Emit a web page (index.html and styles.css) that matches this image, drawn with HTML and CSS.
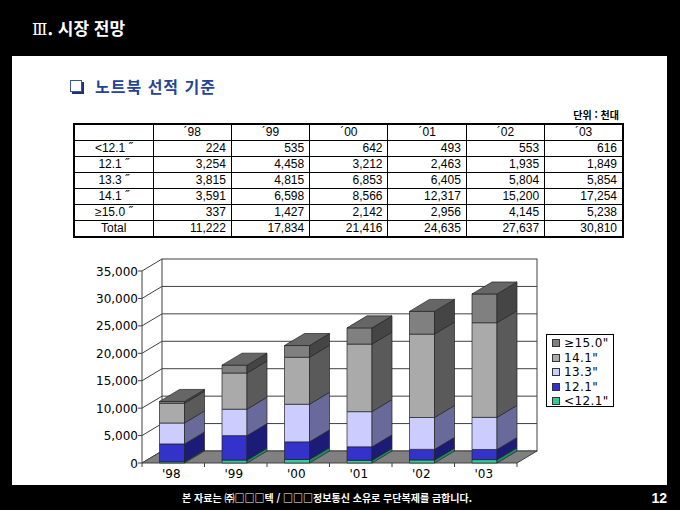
FILE: index.html
```html
<!DOCTYPE html>
<html lang="ko">
<head>
<meta charset="utf-8">
<title>시장 전망</title>
<link rel="stylesheet" href="styles.css">
</head>
<body>
<header class="top-bar">
  <h1 class="page-title"><span class="numeral">Ⅲ</span>. 시장 전망</h1>
</header>
<main class="panel">
  <h2 class="subtitle"><span class="check-box"></span><span>노트북 선적 기준</span></h2>
  <div class="unit">단위 : 천대</div>
  <table class="data-table">
    <colgroup><col class="col-head"><col span="6"></colgroup>
    <thead>
      <tr><th></th><th>´98</th><th>´99</th><th>´00</th><th>´01</th><th>´02</th><th>´03</th></tr>
    </thead>
    <tbody>
      <tr><th>&lt;12.1 ˝</th><td>224</td><td>535</td><td>642</td><td>493</td><td>553</td><td>616</td></tr>
      <tr><th>12.1 ˝</th><td>3,254</td><td>4,458</td><td>3,212</td><td>2,463</td><td>1,935</td><td>1,849</td></tr>
      <tr><th>13.3 ˝</th><td>3,815</td><td>4,815</td><td>6,853</td><td>6,405</td><td>5,804</td><td>5,854</td></tr>
      <tr><th>14.1 ˝</th><td>3,591</td><td>6,598</td><td>8,566</td><td>12,317</td><td>15,200</td><td>17,254</td></tr>
      <tr><th>≥15.0 ˝</th><td>337</td><td>1,427</td><td>2,142</td><td>2,956</td><td>4,145</td><td>5,238</td></tr>
      <tr><th>Total</th><td>11,222</td><td>17,834</td><td>21,416</td><td>24,635</td><td>27,637</td><td>30,810</td></tr>
    </tbody>
  </table>
  <div class="chart-row">
    <svg id="chart" class="chart" viewBox="80 255 460 227" width="460" height="227" xmlns="http://www.w3.org/2000/svg"></svg>
    <ul class="legend">
      <li class="legend-item"><span class="swatch swatch-15"></span>≥15.0"</li>
      <li class="legend-item"><span class="swatch swatch-141"></span>14.1"</li>
      <li class="legend-item"><span class="swatch swatch-133"></span>13.3"</li>
      <li class="legend-item"><span class="swatch swatch-121"></span>12.1"</li>
      <li class="legend-item"><span class="swatch swatch-lt"></span>&lt;12.1"</li>
    </ul>
  </div>
</main>
<footer class="bottom-bar">
  <p class="notice">본 자료는 ㈜□□□텍 / □□□정보통신 소유로 무단복제를 금합니다.</p>
  <span class="page-no">12</span>
</footer>
<script src="script.js"></script>
</body>
</html>
```
FILE: styles.css
```css
html, body {
  margin: 0;
  padding: 0;
}
body {
  width: 680px;
  height: 510px;
  overflow: hidden;
  background: #000;
  font-family: "Liberation Sans", "Noto Sans CJK KR", sans-serif;
}
.top-bar {
  height: 56px;
  box-sizing: border-box;
  padding: 0 0 2px 32px;
  display: flex;
  align-items: center;
}
.page-title {
  margin: 0;
  color: #fff;
  font: bold 17px "Noto Sans CJK KR", sans-serif;
  letter-spacing: 0;
}
.numeral {
  font-family: "DejaVu Serif", "Liberation Serif", serif;
  font-weight: normal;
  font-size: 16px;
}
.panel {
  margin-left: 12px;
  width: 655px;
  height: 429px;
  box-sizing: border-box;
  background: #fff;
  padding-top: 20px;
  overflow: hidden;
}
.subtitle {
  margin: 0 0 0 58px;
  height: 20px;
  display: flex;
  align-items: center;
  gap: 13px;
  color: #24449a;
  font: bold 16px "Noto Sans CJK KR", sans-serif;
  letter-spacing: 1px;
}
.check-box {
  width: 10px;
  height: 10px;
  border: 1px solid #3a56a5;
  background: #fff;
  box-shadow: 2px 2px 0 #1c3275;
}
.unit {
  margin: 11px 48px 0 0;
  height: 13px;
  line-height: 13px;
  text-align: right;
  font: bold 10px "Noto Sans CJK KR", sans-serif;
  color: #000;
}
.data-table {
  margin: 3px 0 0 61px;
  width: 551px;
  border-collapse: collapse;
  table-layout: fixed;
  border: 2px solid #000;
  font: 12px "Liberation Sans", sans-serif;
  color: #000;
}
.col-head {
  width: 79px;
}
.data-table th,
.data-table td {
  border: 1px solid #000;
  height: 15px;
  padding: 0 5px;
  line-height: 15px;
  font-weight: normal;
  white-space: nowrap;
}
.data-table th {
  text-align: center;
}
.data-table td {
  text-align: right;
}
.chart-row {
  display: flex;
  align-items: flex-start;
  margin: 18px 0 0 68px;
}
.chart {
  display: block;
  flex: none;
}
.axis-label {
  font: 12px "DejaVu Sans", sans-serif;
  fill: #000;
}
.legend {
  list-style: none;
  margin: 78px 0 0 6px;
  padding: 1px 0 0 5px;
  width: 68px;
  height: 73px;
  box-sizing: border-box;
  border: 1px solid #000;
  font: 12px "DejaVu Sans", sans-serif;
  letter-spacing: 0.4px;
}
.legend-item {
  height: 14.5px;
  display: flex;
  align-items: center;
  gap: 4px;
  white-space: nowrap;
}
.swatch {
  width: 6px;
  height: 6px;
  border: 1px solid #333;
  flex: none;
}
.swatch-15 { background: #808080; }
.swatch-141 { background: #aaaaaa; }
.swatch-133 { background: #ccccff; }
.swatch-121 { background: #3333cc; }
.swatch-lt { background: #33cc99; }
.bottom-bar {
  height: 25px;
  display: flex;
  align-items: center;
  color: #fff;
}
.notice {
  margin: 0 0 0 182px;
  font: bold 10px "Noto Sans CJK KR", sans-serif;
}
.page-no {
  margin-left: auto;
  margin-right: 13px;
  font: bold 14px "Liberation Sans", sans-serif;
}
```
FILE: script.js
```js
(function () {
  var NS = 'http://www.w3.org/2000/svg';
  var svg = document.getElementById('chart');
  var X0 = 142, Y0 = 462, DX = 20, DY = -12, K = 192 / 35000;
  var CAT = 62.5, BW = 25, XR = 517;
  var GRID = '#404040';

  function el(tag, attrs, text) {
    var n = document.createElementNS(NS, tag);
    for (var a in attrs) n.setAttribute(a, attrs[a]);
    if (text !== undefined) n.textContent = text;
    svg.appendChild(n);
    return n;
  }
  function pts(arr) {
    return arr.map(function (p) { return p[0] + ',' + p[1]; }).join(' ');
  }

  var backY = Y0 + DY;
  el('rect', { x: X0 + DX, y: backY - 35000 * K, width: XR - X0, height: 35000 * K, fill: '#fff', stroke: GRID, 'stroke-width': 1 });
  for (var v = 5000; v < 35000; v += 5000) {
    var yb = backY - v * K;
    el('line', { x1: X0 + DX, y1: yb, x2: XR + DX, y2: yb, stroke: GRID, 'stroke-width': 1 });
  }
  for (var w = 0; w <= 35000; w += 5000) {
    var yf = Y0 - w * K;
    el('line', { x1: X0, y1: yf, x2: X0 + DX, y2: yf + DY, stroke: GRID, 'stroke-width': 1 });
    el('line', { x1: X0 - 4, y1: yf, x2: X0, y2: yf, stroke: GRID, 'stroke-width': 1 });
    el('text', { x: X0 - 4, y: yf + 4.5, 'text-anchor': 'end', 'class': 'axis-label' }, w.toLocaleString('en-US'));
  }
  el('line', { x1: X0, y1: Y0 - 35000 * K, x2: X0, y2: Y0, stroke: GRID, 'stroke-width': 1 });
  el('polygon', { points: pts([[X0, Y0], [XR, Y0], [XR + DX, backY], [X0 + DX, backY]]), fill: '#808080', stroke: GRID, 'stroke-width': 1 });
  for (var t = 0; t <= 6; t++) {
    var xt = X0 + CAT * t;
    el('line', { x1: xt, y1: Y0, x2: xt, y2: Y0 + 4, stroke: GRID, 'stroke-width': 1 });
  }

  var years = ["'98", "'99", "'00", "'01", "'02", "'03"];
  var data = [
    [224, 3254, 3815, 3591, 337],
    [535, 4458, 4815, 6598, 1427],
    [642, 3212, 6853, 8566, 2142],
    [493, 2463, 6405, 12317, 2956],
    [553, 1935, 5804, 15200, 4145],
    [616, 1849, 5854, 17254, 5238]
  ];
  var colors = [
    { front: '#33cc99', side: '#1f8a68' },
    { front: '#3333cc', side: '#1c1c78' },
    { front: '#ccccff', side: '#6a6a9a' },
    { front: '#aaaaaa', side: '#5a5a5a' },
    { front: '#808080', side: '#454545' }
  ];
  var STROKE = { stroke: '#222', 'stroke-width': 0.7, 'stroke-linejoin': 'round' };
  function withStroke(o) { for (var s in STROKE) o[s] = STROKE[s]; return o; }

  data.forEach(function (vals, i) {
    var x = X0 + CAT * i + 17.5;
    var acc = 0;
    vals.forEach(function (val, s) {
      var y1 = Y0 - acc * K;
      acc += val;
      var y2 = Y0 - acc * K;
      el('rect', withStroke({ x: x, y: y2, width: BW, height: y1 - y2, fill: colors[s].front }));
      el('polygon', withStroke({ points: pts([[x + BW, y1], [x + BW + DX, y1 + DY], [x + BW + DX, y2 + DY], [x + BW, y2]]), fill: colors[s].side }));
    });
    var yt = Y0 - acc * K;
    el('polygon', withStroke({ points: pts([[x, yt], [x + DX, yt + DY], [x + BW + DX, yt + DY], [x + BW, yt]]), fill: '#666666' }));
    el('text', { x: X0 + CAT * (i + 0.5) - 2, y: 477, 'text-anchor': 'middle', 'class': 'axis-label' }, years[i]);
  });
})();
```
